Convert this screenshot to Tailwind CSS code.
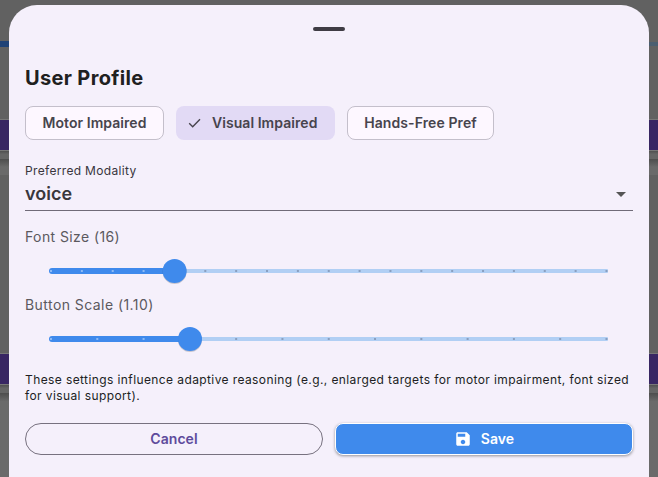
<!DOCTYPE html>
<html lang="en">
<head>
<meta charset="utf-8">
<title>User Profile</title>
<script src="https://cdn.jsdelivr.net/npm/@tailwindcss/browser@4"></script>
</head>
<body class="relative h-[477px] w-[658px] overflow-hidden bg-[#616161] font-['Inter',sans-serif]">
  <!-- dimmed page behind the sheet -->
  <div class="flex h-full flex-col">
    <div class="mt-[41px] flex h-[6px] items-center"><div class="h-[6px] w-1/2 bg-[#1f4276]"></div><div class="h-[4px] w-1/2 bg-[#4b5e70]"></div></div>
    <div class="mt-[72px] h-[32px] border-y border-[#777] bg-[#382663]"></div>
    <div class="h-[8px] bg-linear-to-b from-[#505050] to-[#656565] to-40%"></div>
    <div class="h-[16px] bg-linear-to-b from-[#4d4d4d] to-[#6a6a6a] to-50%"></div>
    <div class="mt-[178px] h-[32px] border-y border-[#777] bg-[#382663]"></div>
    <div class="h-[8px] bg-linear-to-b from-[#505050] to-[#656565] to-40%"></div>
    <div class="flex-1 bg-linear-to-b from-[#4d4d4d] to-[#6a6a6a] to-10%"></div>
  </div>

  <main class="absolute inset-x-[9px] top-[5px] bottom-0 flex flex-col rounded-t-[28px] bg-[#f5f0fb] px-4">
    <div class="mx-auto mt-[22px] h-1 w-8 shrink-0 rounded-full bg-[#3f3c44]"></div>
    <h1 class="mt-[33px] h-7 text-[20px] leading-7 font-bold tracking-[0.34px] text-[#202020]">User Profile</h1>

    <div class="mt-[14px] flex h-[34px] gap-3 text-[14px] font-semibold text-[#47444d]">
      <button class="flex w-[139px] items-center justify-center rounded-lg border border-[#c4bfcb] bg-[#fdf7ff] tracking-[0.05px]"><span class="pb-[2px]">Motor Impaired</span></button>
      <button class="flex w-[159px] items-center rounded-lg bg-[#e2daf5] pl-[10px] tracking-[0.05px]">
        <svg class="mr-[8px] size-[18px]" viewBox="0 0 18 18" fill="none" stroke="#47444d" stroke-width="1.4"><path d="M3.2 9.3 6.7 12.7 14 5.3"/></svg><span class="pb-[2px]">Visual Impaired</span>
      </button>
      <button class="flex w-[147px] items-center justify-center rounded-lg border border-[#c4bfcb] bg-[#fdf7ff] tracking-[0.1px]"><span class="pb-[2px]">Hands-Free Pref</span></button>
    </div>

    <div class="mt-[22px] flex h-[49px] flex-col border-b border-[#706b78]">
      <label class="h-[18px] text-[12px] leading-[18px] tracking-[0.33px] text-[#39363d]">Preferred Modality</label>
      <div class="flex h-[28px] items-center justify-between pr-[7px] text-[18px] font-semibold text-[#39373c]">
        <span class="pb-[2px]">voice</span>
        <svg class="h-[5px] w-[10px]" viewBox="0 0 10 5"><path d="M0 0h10L5 5z" fill="#555"/></svg>
      </div>
    </div>

    <div class="mt-[16px] h-5 text-[14px] leading-5 tracking-[0.4px] text-[#5b595e]">Font Size (16)</div>
    <svg class="mx-6 mt-[10px] h-[28px] w-[560px] shrink-0 overflow-visible" viewBox="0 0 560 28">
      <rect x="120" y="12" width="439" height="4" rx="1" fill="#b1cff4"/>
      <rect y="11" width="128" height="6" rx="3" fill="#3f8aec"/>
      <path d="M1 14H126" stroke="#8cbaf5" stroke-width="2" stroke-dasharray="2 28.86"/>
      <path d="M155.3 14H559" stroke="#899fc0" stroke-width="2" stroke-dasharray="2 28.86"/>
      <circle cx="125.6" cy="15" r="12" fill="#000" opacity=".18"/>
      <circle cx="125.6" cy="14" r="12" fill="#3f8aec"/>
    </svg>
    <div class="mt-[10px] h-5 text-[14px] leading-5 tracking-[0.44px] text-[#5b595e]">Button Scale (1.10)</div>
    <svg class="mx-6 mt-[10px] h-[28px] w-[560px] shrink-0 overflow-visible" viewBox="0 0 560 28">
      <rect x="135" y="12" width="424" height="4" rx="1" fill="#b1cff4"/>
      <rect y="11" width="143" height="6" rx="3" fill="#3f8aec"/>
      <path d="M1 14H140" stroke="#8cbaf5" stroke-width="2" stroke-dasharray="2 44.29"/>
      <path d="M186.16 14H559" stroke="#899fc0" stroke-width="2" stroke-dasharray="2 44.29"/>
      <circle cx="141" cy="15" r="12" fill="#000" opacity=".18"/>
      <circle cx="141" cy="14" r="12" fill="#3f8aec"/>
    </svg>

    <p class="mt-[19px] h-8 text-[12px] leading-4 tracking-[0.4px] whitespace-nowrap text-[#201e23]">These settings influence adaptive reasoning (e.g., enlarged targets for motor impairment, font sized<br>for visual support).</p>

    <div class="mt-[19px] flex h-8 gap-3 text-[14px] font-semibold">
      <button class="flex flex-1 items-center justify-center rounded-full border border-[#77717f] tracking-[0.05px] text-[#5e4b9c]"><span class="pb-[2px]">Cancel</span></button>
      <button class="flex flex-1 items-center justify-center rounded-lg border border-white bg-[#3f8aec] tracking-[0.05px] text-white shadow-[0_1px_3px_rgba(0,0,0,0.4)]">
        <svg class="mr-[9px] size-[18px]" viewBox="0 0 24 24" fill="#fff"><path d="M17 3H5c-1.11 0-2 .9-2 2v14c0 1.1.89 2 2 2h14c1.1 0 2-.9 2-2V7l-4-4zm-5 16c-1.66 0-3-1.34-3-3s1.34-3 3-3 3 1.34 3 3-1.34 3-3 3zm3-10H5V5h10v4z"/></svg><span class="pb-[2px]">Save</span>
      </button>
    </div>
  </main>
</body>
</html>
